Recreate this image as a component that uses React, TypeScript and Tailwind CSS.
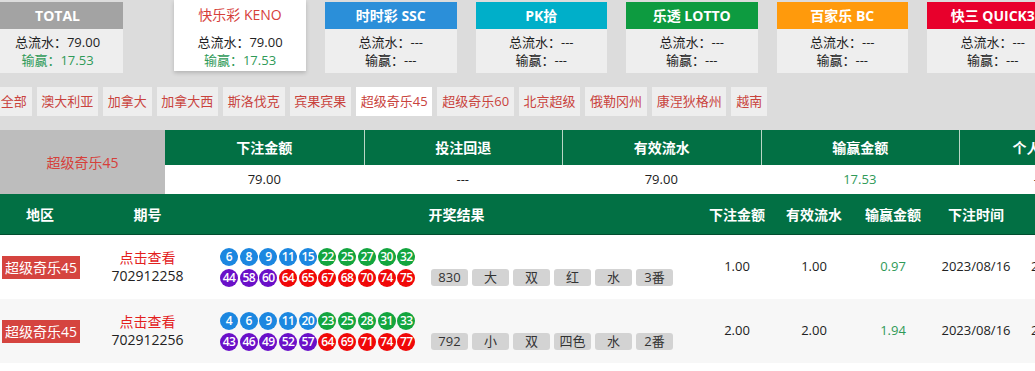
import React from 'react';

const font = { fontFamily: '"Open Sans", "Noto Sans CJK SC", sans-serif' };

interface Card
{
	title: string;
	head: string;
	flow: string;
	win: string;
}

const cards: Card[] = [
	{ title: '时时彩 SSC', head: 'bg-[#2b8fd9]', flow: '---', win: '---' },
	{ title: 'PK拾', head: 'bg-[#00afc9]', flow: '---', win: '---' },
	{ title: '乐透 LOTTO', head: 'bg-[#0d9b40]', flow: '---', win: '---' },
	{ title: '百家乐 BC', head: 'bg-[#ff9a0c]', flow: '---', win: '---' },
	{ title: '快三 QUICK3', head: 'bg-[#e8002c]', flow: '---', win: '---' },
];

const tabs = ['全部', '澳大利亚', '加拿大', '加拿大西', '斯洛伐克', '宾果宾果', '超级奇乐45', '超级奇乐60', '北京超级', '俄勒冈州', '康涅狄格州', '越南'];

const rows = [
	{
		issue: '702912258',
		balls: [6, 8, 9, 11, 15, 22, 25, 27, 30, 32, 44, 58, 60, 64, 65, 67, 68, 70, 74, 75],
		chips: ['830', '大', '双', '红', '水', '3番'],
		bet: '1.00', flow: '1.00', win: '0.97', bg: 'bg-white',
	},
	{
		issue: '702912256',
		balls: [4, 6, 9, 11, 20, 23, 25, 28, 31, 33, 43, 46, 49, 52, 57, 64, 69, 71, 74, 77],
		chips: ['792', '小', '双', '四色', '水', '2番'],
		bet: '2.00', flow: '2.00', win: '1.94', bg: 'bg-[#f7f7f7]',
	},
];

function ballColor(n: number)
{
	if (n <= 20) return 'bg-[#1c87e0]';
	if (n <= 40) return 'bg-[#13a53e]';
	if (n <= 60) return 'bg-[#6a10c8]';
	return 'bg-[#f00808]';
}

function Ball({ n }: { n: number })
{
	return (
		<div className={`${ballColor(n)} w-[18px] h-[18px] rounded-full flex items-center justify-center text-white text-[12px] font-semibold tracking-[-0.6px] leading-none`}>
			{n}
		</div>
	);
}

export default function App()
{
	return (
		<div className="w-[1035px] h-[371px] overflow-hidden bg-[#dcdcdc] text-[13px] text-[#222]" style={font}>
			{/* summary cards */}
			<div className="flex items-start -ml-2 w-[1200px]">
				<div className="w-[131px] mt-[2px] shrink-0">
					<div className="h-[27px] bg-[#a3a3a3] text-white font-bold text-[14px] flex items-center justify-center">TOTAL</div>
					<div className="bg-[#eeeeee] pt-[4px] pb-[4px] leading-[18px] text-center">
						<div>总流水：79.00</div>
						<div className="text-[#2f9a58]">输赢：17.53</div>
					</div>
				</div>
				<div className="w-[132px] ml-[51px] bg-white shadow-[0_2px_4px_rgba(0,0,0,0.18)] shrink-0">
					<div className="h-[29px] text-[#d6403a] text-[14px] flex items-center justify-center">快乐彩 KENO</div>
					<div className="pt-[4px] pb-[2px] leading-[18px] text-center">
						<div>总流水：79.00</div>
						<div className="text-[#2f9a58]">输赢：17.53</div>
					</div>
				</div>
				<div className="flex gap-[19px] ml-[19px]">
					{cards.map((c) => (
						<div key={c.title} className="w-[131.5px] mt-[2px] shrink-0">
							<div className={`${c.head} h-[27px] text-white font-bold text-[14px] flex items-center justify-center whitespace-nowrap`}>{c.title}</div>
							<div className="bg-[#eeeeee] pt-[4px] pb-[4px] leading-[18px] text-center">
								<div>总流水：{c.flow}</div>
								<div>输赢：{c.win}</div>
							</div>
						</div>
					))}
				</div>
			</div>

			{/* region tabs */}
			<div className="flex gap-[5px] mt-[14px] -ml-[4px]">
				{tabs.map((t) => (
					<div
						key={t}
						className={`h-[29px] px-[4.75px] flex items-center whitespace-nowrap text-[#c9433d] ${t === '超级奇乐45' ? 'bg-white' : 'bg-[#eeeeee]'}`}
					>
						{t}
					</div>
				))}
			</div>

			{/* totals */}
			<div className="flex mt-[14px] w-[1200px]">
				<div className="w-[165px] h-[64px] bg-[#bdbdbd] text-[#d6403a] text-[14px] flex items-center justify-center">超级奇乐45</div>
				<div className="flex flex-col">
					<div className="flex h-[35px] bg-[#027044] text-white font-bold text-[14px]">
						{['下注金额', '投注回退', '有效流水', '输赢金额', '个人返水'].map((h, i) => (
							<div key={h} className={`${i === 4 ? 'w-[162px]' : 'w-[198.5px]'} flex items-center justify-center ${i > 0 ? 'border-l border-[#b9d6c6]' : ''}`}>{h}</div>
						))}
					</div>
					<div className="flex h-[29px] bg-white">
						{['79.00', '---', '79.00', '17.53', '---'].map((v, i) => (
							<div key={i} className={`${i === 4 ? 'w-[162px]' : 'w-[198.5px]'} flex items-center justify-center ${i === 3 ? 'text-[#2f9a58]' : ''}`}>{v}</div>
						))}
					</div>
				</div>
			</div>

			{/* records */}
			<div className="w-[1200px]">
				<div className="flex h-[41px] bg-[#027044] text-white font-bold text-[14px] border-b border-[#014d2f]">
					<div className="w-[80px] flex items-center justify-center">地区</div>
					<div className="w-[135px] flex items-center justify-center">期号</div>
					<div className="w-[483px] flex items-center justify-center">开奖结果</div>
					<div className="w-[78px] flex items-center justify-center">下注金额</div>
					<div className="w-[76px] flex items-center justify-center">有效流水</div>
					<div className="w-[82px] flex items-center justify-center">输赢金额</div>
					<div className="w-[84px] flex items-center justify-center">下注时间</div>
				</div>
				{rows.map((r) => (
					<div key={r.issue} className={`flex h-[64px] ${r.bg}`}>
						<div className="w-[80px] shrink-0 flex items-center pl-[2px]">
							<span className="bg-[#d5443f] text-white text-[14px] h-[23px] px-[3px] flex items-center whitespace-nowrap">超级奇乐45</span>
						</div>
						<div className="w-[135px] shrink-0 flex flex-col items-center justify-center leading-[18px]">
							<span className="text-[#e3201c] text-[14px]">点击查看</span>
							<span className="text-[14px]">{r.issue}</span>
						</div>
						<div className="w-[483px] shrink-0 flex items-center pl-[5px]">
							<div className="flex flex-col gap-[3px] w-[197px]">
								<div className="flex gap-[1.7px]">
									{r.balls.slice(0, 10).map((n) => <Ball key={n} n={n} />)}
								</div>
								<div className="flex gap-[1.7px]">
									{r.balls.slice(10).map((n) => <Ball key={n} n={n} />)}
								</div>
							</div>
							<div className="flex gap-[4px] ml-[14px] self-end mb-[13px]">
								{r.chips.map((c, i) => (
									<span key={i} className="w-[37px] h-[17px] bg-[#d3d3d3] rounded-[3px] flex items-center justify-center text-[13px] text-[#333]">{c}</span>
								))}
							</div>
						</div>
						<div className="w-[78px] shrink-0 flex items-center justify-center">{r.bet}</div>
						<div className="w-[76px] shrink-0 flex items-center justify-center">{r.flow}</div>
						<div className="w-[82px] shrink-0 flex items-center justify-center text-[#2f9a58]">{r.win}</div>
						<div className="w-[84px] shrink-0 flex items-center justify-center">2023/08/16</div>
						<div className="flex items-center pl-[13px] whitespace-nowrap">2023/08/16</div>
					</div>
				))}
				<div className="h-[10px] bg-white" />
			</div>
		</div>
	);
}
